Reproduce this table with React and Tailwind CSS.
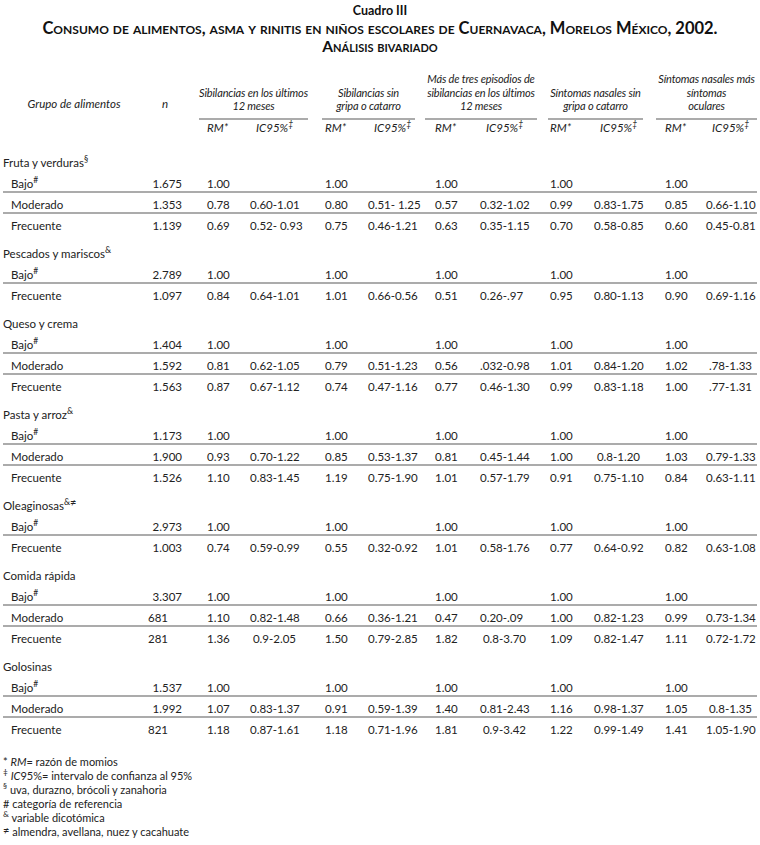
import React from "react";

const rightSet = new Set(["0.9-2.05", "0.8-3.70", "0.9-3.42", "0.8-1.35", ".78-1.33", ".77-1.31", "0.8-1.20"]);

const B = ["1.00", "", "1.00", "", "1.00", "", "1.00", "", "1.00", ""];

const groups = [
  {
    name: "Fruta y verduras",
    sup: "§",
    rows: [
      ["Bajo", "1.675", B],
      ["Moderado", "1.353", ["0.78", "0.60-1.01", "0.80", "0.51- 1.25", "0.57", "0.32-1.02", "0.99", "0.83-1.75", "0.85", "0.66-1.10"]],
      ["Frecuente", "1.139", ["0.69", "0.52- 0.93", "0.75", "0.46-1.21", "0.63", "0.35-1.15", "0.70", "0.58-0.85", "0.60", "0.45-0.81"]],
    ],
  },
  {
    name: "Pescados y mariscos",
    sup: "&",
    rows: [
      ["Bajo", "2.789", B],
      ["Frecuente", "1.097", ["0.84", "0.64-1.01", "1.01", "0.66-0.56", "0.51", "0.26-.97", "0.95", "0.80-1.13", "0.90", "0.69-1.16"]],
    ],
  },
  {
    name: "Queso y crema",
    sup: "",
    rows: [
      ["Bajo", "1.404", B],
      ["Moderado", "1.592", ["0.81", "0.62-1.05", "0.79", "0.51-1.23", "0.56", ".032-0.98", "1.01", "0.84-1.20", "1.02", ".78-1.33"]],
      ["Frecuente", "1.563", ["0.87", "0.67-1.12", "0.74", "0.47-1.16", "0.77", "0.46-1.30", "0.99", "0.83-1.18", "1.00", ".77-1.31"]],
    ],
  },
  {
    name: "Pasta y arroz",
    sup: "&",
    rows: [
      ["Bajo", "1.173", B],
      ["Moderado", "1.900", ["0.93", "0.70-1.22", "0.85", "0.53-1.37", "0.81", "0.45-1.44", "1.00", "0.8-1.20", "1.03", "0.79-1.33"]],
      ["Frecuente", "1.526", ["1.10", "0.83-1.45", "1.19", "0.75-1.90", "1.01", "0.57-1.79", "0.91", "0.75-1.10", "0.84", "0.63-1.11"]],
    ],
  },
  {
    name: "Oleaginosas",
    sup: "&",
    ne: true,
    rows: [
      ["Bajo", "2.973", B],
      ["Frecuente", "1.003", ["0.74", "0.59-0.99", "0.55", "0.32-0.92", "1.01", "0.58-1.76", "0.77", "0.64-0.92", "0.82", "0.63-1.08"]],
    ],
  },
  {
    name: "Comida rápida",
    sup: "",
    rows: [
      ["Bajo", "3.307", B],
      ["Moderado", "681", ["1.10", "0.82-1.48", "0.66", "0.36-1.21", "0.47", "0.20-.09", "1.00", "0.82-1.23", "0.99", "0.73-1.34"]],
      ["Frecuente", "281", ["1.36", "0.9-2.05", "1.50", "0.79-2.85", "1.82", "0.8-3.70", "1.09", "0.82-1.47", "1.11", "0.72-1.72"]],
    ],
  },
  {
    name: "Golosinas",
    sup: "",
    rows: [
      ["Bajo", "1.537", B],
      ["Moderado", "1.992", ["1.07", "0.83-1.37", "0.91", "0.59-1.39", "1.40", "0.81-2.43", "1.16", "0.98-1.37", "1.05", "0.8-1.35"]],
      ["Frecuente", "821", ["1.18", "0.87-1.61", "1.18", "0.71-1.96", "1.81", "0.9-3.42", "1.22", "0.99-1.49", "1.41", "1.05-1.90"]],
    ],
  },
];

const GRID = "grid grid-cols-[142px_40px_22px_43px_75px_43px_67px_45px_70px_44px_71px_41px_51px]";

function DataRow({ label, n, vals, line }) {
  const nLeft = n.length === 3;
  return (
    <div className={`${GRID} pt-[5px] leading-[14px] border-b-2 ${line ? "border-[#ababab]" : "border-transparent"}`}>
      <div className="pl-[8px] whitespace-nowrap">
        {label}
        {label === "Bajo" ? <sup>#</sup> : null}
      </div>
      <div className={nLeft ? "text-left pl-[3px]" : "text-right pr-[3px]"}>{n}</div>
      <div />
      {vals.map((v, i) =>
        i % 2 === 0 ? (
          <div key={i} className="whitespace-nowrap">{v}</div>
        ) : (
          <div key={i} className="whitespace-nowrap">
            <span className={rightSet.has(v) ? "inline-block w-[46px] text-right" : "inline-block w-[46px] text-left"}>{v}</span>
          </div>
        )
      )}
    </div>
  );
}

export default function App() {
  return (
    <div className="w-[760px] h-[845px] bg-white px-[3px] text-[#222] text-[11.5px] font-['Lato','Noto_Sans',sans-serif] overflow-hidden">
      {/* Title */}
      <div className="pt-[3px] text-center font-bold text-[#111]">
        <div className="text-[12.5px] leading-[16px]">Cuadro III</div>
        <div className="text-[16.5px] leading-[18px] [font-variant:small-caps] whitespace-nowrap">
          Consumo de alimentos, asma y rinitis en niños escolares de Cuernavaca, Morelos México, 2002.
        </div>
        <div className="pt-[1px] text-[15.5px] leading-[16px] [font-variant:small-caps]">Análisis bivariado</div>
      </div>

      {/* Header top */}
      <div className="mt-[18px] flex items-end">
        <div className="w-[142px] text-center italic pb-[9px] leading-[14px]">Grupo de alimentos</div>
        <div className="w-[40px] text-center italic pb-[9px] leading-[14px]">n</div>
        <div className="w-[109px] ml-[14px] flex flex-col items-center border-b-2 border-[#ababab] pb-[5px] text-[11px] tracking-[-0.15px] leading-[13.5px] italic whitespace-nowrap">
          <span>Sibilancias en los últimos</span>
          <span>12 meses</span>
        </div>
        <div className="w-[93px] ml-[14px] flex flex-col items-center border-b-2 border-[#ababab] pb-[5px] text-[11px] tracking-[-0.15px] leading-[13.5px] italic whitespace-nowrap">
          <span>Sibilancias sin</span>
          <span>gripa o catarro</span>
        </div>
        <div className="w-[112px] ml-[10px] flex flex-col items-center border-b-2 border-[#ababab] pb-[5px] text-[11px] tracking-[-0.15px] leading-[13.5px] italic whitespace-nowrap">
          <span>Más de tres episodios de</span>
          <span>sibilancias en los últimos</span>
          <span>12 meses</span>
        </div>
        <div className="w-[95px] ml-[11px] flex flex-col items-center border-b-2 border-[#ababab] pb-[5px] text-[11px] tracking-[-0.15px] leading-[13.5px] italic whitespace-nowrap">
          <span>Síntomas nasales sin</span>
          <span>gripa o catarro</span>
        </div>
        <div className="w-[101px] ml-[13px] flex flex-col items-center border-b-2 border-[#ababab] pb-[5px] text-[11px] tracking-[-0.15px] leading-[13.5px] italic whitespace-nowrap">
          <span>Síntomas nasales más</span>
          <span>síntomas</span>
          <span>oculares</span>
        </div>
      </div>

      {/* Header RM / IC */}
      <div className={`${GRID} pt-[1px] leading-[14px] italic`}>
        <div />
        <div />
        <div />
        {[0, 1, 2, 3, 4].map((i) => (
          <React.Fragment key={i}>
            <div>RM*</div>
            <div className="pl-[6px]">
              IC95%<sup>‡</sup>
            </div>
          </React.Fragment>
        ))}
      </div>

      {/* Body */}
      <div className="mt-[16px]">
        {groups.map((g, gi) => (
          <div key={g.name} className={gi === 0 ? "" : "mt-[7px]"}>
            <div className="pt-[5px] leading-[14px] border-b-2 border-transparent whitespace-nowrap">
              {g.name}
              {g.sup ? <sup>{g.sup}</sup> : null}
              {g.ne ? <span className="relative top-[-4px] text-[11px]">≠</span> : null}
            </div>
            {g.rows.map((r, ri) => (
              <DataRow key={ri} label={r[0]} n={r[1]} vals={r[2]} line={ri < g.rows.length - 1} />
            ))}
          </div>
        ))}
      </div>

      {/* Footnotes */}
      <div className="mt-[16px] text-[11px] leading-[14px]">
        <div>
          * <span className="italic">RM</span>= razón de momios
        </div>
        <div>
          <sup>‡</sup> <span className="italic">IC</span>95%= intervalo de confianza al 95%
        </div>
        <div>
          <sup>§</sup> uva, durazno, brócoli y zanahoria
        </div>
        <div># categoría de referencia</div>
        <div>
          <sup>&amp;</sup> variable dicotómica
        </div>
        <div>
          <span className="relative top-[-2px]">≠</span> almendra, avellana, nuez y cacahuate
        </div>
      </div>
    </div>
  );
}
